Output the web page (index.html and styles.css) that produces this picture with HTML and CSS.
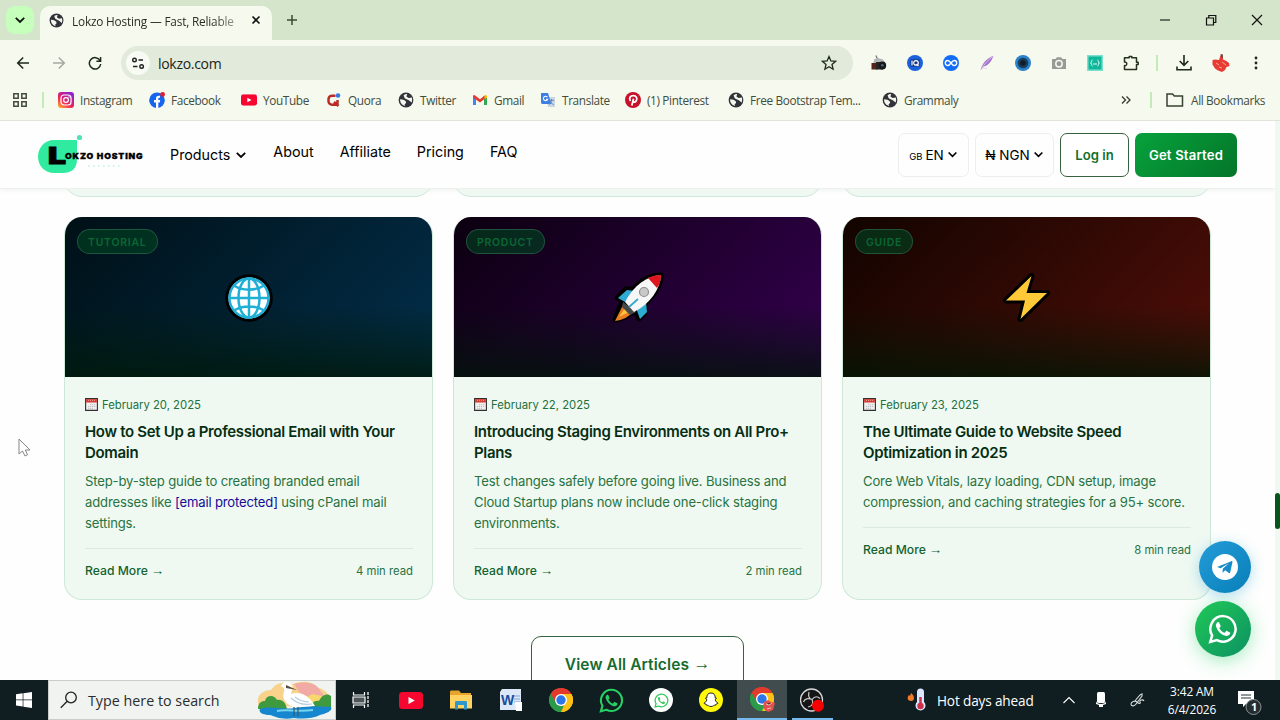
FILE: index.html
```html
<!DOCTYPE html>
<html lang="en">
<head>
    <meta charset="UTF-8">
    <meta name="viewport" content="width=device-width, initial-scale=1.0">
    <title>Lokzo Hosting — Fast, Reliable</title>
    <link rel="stylesheet" href="styles.css">
</head>
<body>
    <!-- Shared icons -->
    <svg class="sprite" aria-hidden="true">
        <symbol id="chevron" viewBox="0 0 12 12"><path d="M1.8 3.8 6 8l4.2-4.2" fill="none" stroke="currentColor" stroke-width="1.8"/></symbol>
        <symbol id="site" viewBox="0 0 16 16">
            <circle cx="8" cy="8" r="7.4" fill="#30343a"/>
            <path d="M9.2 2.1 8.4 4.4 10.6 6l3.2-.4c.5 1.5.5 3.4-.2 5L10.8 8.300 8.600 7.300 6.700 6.200 5.600 3.300C6.700 2.400 8 2 9.200 2.100zM2.100 7.300l3.400.5 2.300 1.400.3 1.700-1.500 1.300.5 1.700C4 13.400 1.900 10.600 2.100 7.300z" fill="#f4f8ec"/>
        </symbol>
        <symbol id="calendar" viewBox="0 0 13 13">
            <path d="M.6.6h11.8v11.8H.6z" fill="#f1eeee" stroke="#30302f" stroke-width="1.1"/>
            <path d="M1.100 1.100h10.800v3.400H1.100z" fill="#d63b30"/>
            <path d="M3 2.400h7" stroke="#f3b5ae" stroke-width=".8" stroke-dasharray="1 1"/>
            <path d="M5 6.700h6M3 8.500h8M3 10.300h5" stroke="#b5b5bd" stroke-width=".9" stroke-dasharray="1.200 .8"/>
        </symbol>
        <symbol id="whatsapp" viewBox="0 0 24 24">
            <path d="M12.100 1.700a10.200 10.200 0 0 0-8.800 15.400L1.800 22.300l5.300-1.400A10.200 10.200 0 1 0 12.100 1.700z" fill="none" stroke="currentColor" stroke-width="2"/>
            <path d="M8.400 6.500c-.4-.1-.9 0-1.200.4-.8.900-1.100 2-.7 3.200 1.100 3.500 3.900 6.200 7.400 7.300 1.300.4 2.700-.1 3.500-1.200.4-.6.500-1.300.2-1.500l-2.400-1.200c-.3-.1-.6 0-.8.2l-.9 1.100c-.2.200-.4.200-.6.100-1.600-.7-2.900-1.900-3.700-3.400-.1-.2-.1-.4.1-.6l.7-.8c.2-.2.200-.5.1-.7L9 7c-.1-.3-.3-.5-.6-.5z" fill="currentColor"/>
        </symbol>
        <symbol id="youtube" viewBox="0 0 24 17"><rect width="24" height="17" rx="3.500" fill="#f5072f"/><path d="m9.500 5 6.300 3.500L9.500 12z" fill="#fff"/></symbol>
        <symbol id="chrome" viewBox="0 0 24 24">
            <path d="M12 12 1.610 6A12 12 0 0 1 22.390 6z" fill="#e23b2e"/>
            <path d="M12 12 22.390 6A12 12 0 0 1 12 24z" fill="#fbc116"/>
            <path d="M12 12v12A12 12 0 0 1 1.610 6z" fill="#2c9b49"/>
            <path d="M12 6h10.400A12 12 0 0 1 12 24l5.200-9z" fill="#fbc116"/>
            <path d="M1.610 6A12 12 0 0 1 22.390 6H12v6l-5.200 3z" fill="#e23b2e"/>
            <path d="M1.610 6 6.800 15l5.200 3 3-.5L12 24A12 12 0 0 1 1.610 6z" fill="#2c9b49"/>
            <circle cx="12" cy="12" r="6" fill="#fff"/><circle cx="12" cy="12" r="4.700" fill="#2b76e9"/>
        </symbol>
    </svg>

    <div class="tab-strip">
        <button class="tab-search"><svg width="12" height="12"><use href="#chevron"/></svg></button>
        <div class="tab">
            <svg class="tab-icon" width="15" height="15"><use href="#site"/></svg>
            <span class="tab-title">Lokzo Hosting — Fast, Reliable</span>
            <svg width="10" height="10" viewBox="0 0 10 10"><path d="m1.500 1.500 7 7m0-7-7 7" stroke="#111" stroke-width="1.600"/></svg>
        </div>
        <svg class="new-tab" width="12" height="12" viewBox="0 0 12 12"><path d="M6 1v10M1 6h10" stroke="#3a4a36" stroke-width="1.500"/></svg>
        <div class="window-controls">
            <svg width="12" height="12" viewBox="0 0 12 12"><path d="M1 6h10" stroke="#111" stroke-width="1.100"/></svg>
            <svg width="12" height="12" viewBox="0 0 12 12"><path d="M1.500 4h7v7h-7zM3.800 3.700V1.500h7v7H8.800" fill="none" stroke="#111" stroke-width="1.200"/></svg>
            <svg width="12" height="12" viewBox="0 0 12 12"><path d="m1 1 10 10M11 1 1 11" stroke="#111" stroke-width="1.200"/></svg>
        </div>
    </div>

    <div class="toolbar">
        <div class="nav-buttons">
            <svg width="14" height="14" viewBox="0 0 14 14"><path d="M13 7H2M7.200 1.500 1.700 7l5.500 5.500" fill="none" stroke="#1d2a1a" stroke-width="1.500"/></svg>
            <svg width="14" height="14" viewBox="0 0 14 14"><path d="M1 7h11M6.800 1.500 12.300 7l-5.500 5.500" fill="none" stroke="#a4aaa0" stroke-width="1.500"/></svg>
            <svg width="14" height="14" viewBox="0 0 14 14"><path d="M12 4.500A5.700 5.700 0 1 0 12.700 8M12.600 1v4.200H8.400" fill="none" stroke="#1d2a1a" stroke-width="1.500"/></svg>
        </div>
        <div class="address-bar">
            <span class="site-info"><svg width="14" height="14" viewBox="0 0 14 14"><path d="M7.500 4H12M2 10.500h4.500" stroke="#222" stroke-width="1.500"/><circle cx="3.500" cy="4" r="1.800" fill="none" stroke="#222" stroke-width="1.400"/><circle cx="10.600" cy="10.500" r="1.800" fill="none" stroke="#222" stroke-width="1.400"/></svg></span>
            <span class="url">lokzo.com</span>
            <svg width="16" height="16" viewBox="0 0 16 16"><path d="m8 1.500 1.900 4.400 4.800.4L11 9.500l1.100 4.700L8 11.700l-4.100 2.500L5 9.500 1.300 6.300l4.800-.4z" fill="none" stroke="#1d2a1a" stroke-width="1.300"/></svg>
        </div>
        <div class="extensions">
            <svg viewBox="0 0 16 16"><path d="m5 .5 1.500 4" stroke="#777" stroke-width="1.300"/><path d="M3 4.500 7 3l5 1.500 2 3v3H2z" fill="#b3b6b8"/><path d="M.5 8h6v6.500h-6z" fill="#562119"/><path d="M5 7h7v7.500H5z" fill="#292525"/><circle cx="11.300" cy="10.500" r="3.900" fill="#17191c"/><circle cx="11.300" cy="10.300" r="1.300" fill="#536776"/></svg>
            <svg viewBox="0 0 16 16"><circle cx="8" cy="8" r="8" fill="#1a62dd"/><rect x="3.500" y="4.500" width="9" height="7" fill="#102f79"/><path d="M5 5.500v5M9 5.600a2 2 0 1 0 0 4.600 2 2 0 0 0 0-4.600M9.500 9l2 2" fill="none" stroke="#fff" stroke-width="1.200"/></svg>
            <svg viewBox="0 0 16 16"><circle cx="8" cy="8" r="8" fill="#116df4"/><path d="M8 8c-1.500-2-2.200-2.500-3.200-2.500a2.400 2.400 0 0 0 0 5C5.800 10.500 6.500 10 8 8s2.200-2.500 3.200-2.500a2.400 2.400 0 0 1 0 5C10.200 10.500 9.500 10 8 8z" fill="none" stroke="#fff" stroke-width="1.400"/></svg>
            <svg viewBox="0 0 16 16"><path d="M14.500.8C8 3 3.500 8 1.500 15.200L5 11.500c4-.7 7.500-5 9.500-10.700z" fill="#a473cf"/><path d="M2 15C5 9 9 5 13.800 1.500M4 13.500h4" fill="none" stroke="#e4d0f0" stroke-width=".8"/></svg>
            <svg viewBox="0 0 16 16"><circle cx="8" cy="8" r="8" fill="#2b82c9"/><circle cx="8" cy="8" r="5.300" fill="#183e5c"/><circle cx="8" cy="8" r="2.800" fill="#111c27"/></svg>
            <svg viewBox="0 0 16 16"><path d="M1 4h3.500L6 2.200h4L11.500 4H15v10H1z" fill="#969b96"/><circle cx="8" cy="8.800" r="3.200" fill="none" stroke="#f5f8f0" stroke-width="1.500"/></svg>
            <svg viewBox="0 0 16 16"><path d="M0 0h16v16H0z" fill="#7be1cd"/><path d="M1.500 1.500h13v13h-13z" fill="#11b69b"/><path d="M5.500 5C4 5 5.200 8 3.500 8 5.200 8 4 11 5.500 11M10.500 5c1.500 0 .3 3 2 3-1.700 0-.5 3-2 3M6 9h4" fill="none" stroke="#dffff6"/></svg>
            <svg viewBox="0 0 16 16"><path d="M1.500 2.800h4.700V1.500h2.600v1.300h4.700v4.400h1.700v2.400h-1.700v5h-12v-4c3 .5 3-4 0-3.500z" fill="none" stroke="#25331f" stroke-width="1.500" stroke-linejoin="round"/></svg>
        </div>
        <span class="divider"></span>
        <div class="browser-actions">
            <svg width="16" height="16" viewBox="0 0 16 16"><path d="M8 0v10M3.700 6 8 10.300 12.300 6M1 11.500v3.300h14v-3.300" fill="none" stroke="#1d2a1a" stroke-width="1.600"/></svg>
            <svg width="18" height="18" viewBox="0 0 18 18"><path d="M8.500 1.500 11 1v4.500l3 1.200 3 2.300.5 3-3 1-1.500 3-3 2-4-1.500-3-2-2.500-4L.5 6l3-.5L7 6z" fill="#e63c34"/><path d="m8.500 0 2.500.5v3.500L9 3.500z" fill="#764b3e"/><path d="m4 9 3 2m3-3 4 3M7 13l3 1" stroke="#ffa18f"/></svg>
            <svg width="4" height="14" viewBox="0 0 4 14" fill="#1d2a1a"><circle cx="2" cy="2" r="1.400"/><circle cx="2" cy="7" r="1.400"/><circle cx="2" cy="12" r="1.400"/></svg>
        </div>
    </div>

    <div class="bookmarks">
        <svg width="14" height="14" viewBox="0 0 14 14"><path d="M.8.800h4.400v4.400H.8zM8.800.800h4.400v4.400H8.800zM.8 8.800h4.400v4.400H.8zM8.800 8.800h4.400v4.400H8.800z" fill="none" stroke="#434c3d" stroke-width="1.500"/></svg>
        <span class="divider"></span>
        <div class="bookmark-list">
            <a class="bookmark"><svg viewBox="0 0 16 16"><defs><linearGradient id="ig" x1="0" y1="1" x2=".7" y2="0"><stop offset="0" stop-color="#ffbd28"/><stop offset=".45" stop-color="#ed245c"/><stop offset="1" stop-color="#8f22d0"/></linearGradient></defs><rect width="16" height="16" rx="3" fill="url(#ig)"/><rect x="3" y="3" width="10" height="10" rx="3" fill="none" stroke="#fff" stroke-width="1.200"/><circle cx="8" cy="8" r="2.400" fill="none" stroke="#fff" stroke-width="1.200"/><circle cx="11" cy="5" r=".7" fill="#fff"/></svg>Instagram</a>
            <a class="bookmark"><svg viewBox="0 0 16 16"><circle cx="8" cy="8.200" r="7.800" fill="#1565ee"/><path d="M7 16v-5.500H5V8h2V6.500C7 4.300 8.200 3.400 11 3.700v2.100C9.600 5.700 9.300 6 9.300 7v1h1.900l-.4 2.500H9.300V16z" fill="#fff"/><circle cx="13.600" cy="2.400" r="2.400" fill="#dd1e32"/></svg>Facebook</a>
            <a class="bookmark"><svg viewBox="0 0 16 16"><use href="#youtube" y="2.300" width="16" height="11.400"/></svg>YouTube</a>
            <a class="bookmark"><svg viewBox="0 0 16 16"><path d="M9.500 3.700H6a3.500 3.500 0 0 0-3.500 3.500v2A3.500 3.500 0 0 0 6 12.700h4c1 0 1.500-.6 1.500-1.500V8M8 10l4.500 4" fill="none" stroke="#b92b27" stroke-width="2.500"/><circle cx="12" cy="3.500" r="2.300" fill="#3977e5"/></svg>Quora</a>
            <a class="bookmark"><svg><use href="#site"/></svg>Twitter</a>
            <a class="bookmark"><svg viewBox="0 0 16 16"><path d="M1 4v9h3V6z" fill="#4285f4"/><path d="M15 4v9h-3V6z" fill="#34a853"/><path d="M12 7V4l1.500-1L15 3.500V6z" fill="#fbbc04"/><path d="M1 3.500 2.500 3 8 7.200 12.500 3.600V7L8 10.500 1 5.500z" fill="#e33b2e"/></svg>Gmail</a>
            <a class="bookmark"><svg viewBox="0 0 16 16"><path d="M6 5h9v10H8z" fill="#ccd6e2"/><path d="M1 1h7l3.500 11H2l-1-1z" fill="#3e7de4"/><path d="M7.500 5.300a2.200 2.200 0 1 0 .2 2H6" fill="none" stroke="#fff" stroke-width="1.100"/><path d="M9 8.300h5M11.500 7v1.300c0 2-1 3.200-2.500 4.200m1-3c.7 1.300 2 2.500 3.600 3" fill="none" stroke="#5c87be"/></svg>Translate</a>
            <a class="bookmark"><svg viewBox="0 0 16 16"><circle cx="8" cy="8" r="8" fill="#c7102a"/><path d="M6.800 13.500 8.500 6.700M5.500 9C3.500 6 5.200 3.700 8.300 3.700c3 0 4.300 2.400 3.100 4.800-1 2-3.200 2-3.800.7" fill="none" stroke="#fff" stroke-width="1.700"/></svg>(1) Pinterest</a>
            <a class="bookmark"><svg><use href="#site"/></svg>Free Bootstrap Tem...</a>
            <a class="bookmark"><svg><use href="#site"/></svg>Grammaly</a>
        </div>
        <svg class="more-bookmarks" width="10" height="10" viewBox="0 0 10 10"><path d="m1 1.500 3.500 3.500L1 8.500m4.500-7L9 5 5.500 8.500" fill="none" stroke="#333b2e" stroke-width="1.300"/></svg>
        <span class="divider"></span>
        <a class="all-bookmarks"><svg width="18" height="14" viewBox="0 0 18 14"><path d="M1 1h5.500l1.800 2H16.500v10H1z" fill="none" stroke="#38432f" stroke-width="1.500"/></svg>All Bookmarks</a>
    </div>

    <div class="page">
        <header class="site-header">
            <svg class="logo" width="110" height="44" viewBox="0 0 110 44">
                <path d="M17 8h23v19c0 9-5 14-14 14h-9C8 41 1 34 1 25S7 8 17 8z" fill="#30eaa0"/>
                <circle cx="42.500" cy="5.500" r="2.600" fill="#4ee2b5"/>
                <text class="logo-initial" x="11" y="32" textLength="18" lengthAdjust="spacingAndGlyphs">L</text>
                <text class="logo-name" x="28" y="27" textLength="78.500" lengthAdjust="spacingAndGlyphs">OKZO HOSTING</text>
                <path d="M51 34h32" stroke="#b9f2e0" stroke-width="1.300" stroke-dasharray="1.500 3.500"/>
            </svg>
            <nav class="menu">
                <a class="menu-products">Products <svg width="12" height="12"><use href="#chevron"/></svg></a>
                <a>About</a>
                <a>Affiliate</a>
                <a>Pricing</a>
                <a>FAQ</a>
            </nav>
            <div class="header-actions">
                <button class="select select-lang"><small>GB</small> EN <svg width="11" height="11"><use href="#chevron"/></svg></button>
                <button class="select select-currency">₦ NGN <svg width="11" height="11"><use href="#chevron"/></svg></button>
                <button class="btn btn-login">Log in</button>
                <button class="btn btn-start">Get Started</button>
            </div>
        </header>

        <main class="articles">
            <div class="previous-row"><i></i><i></i><i></i></div>
            <div class="card-grid">
                <article class="card">
                    <div class="card-cover cover-blue">
                        <span class="badge">TUTORIAL</span>
                        <svg width="50" height="50" viewBox="0 0 50 50"><circle cx="25" cy="25" r="23.800" fill="#000"/><circle cx="25" cy="25" r="20.500" fill="#fff"/><g fill="none" stroke="#20afd5" stroke-width="2.500"><circle cx="25" cy="25" r="19.500"/><ellipse cx="25" cy="25" rx="10.500" ry="19.500"/><path d="M25 5v40M5 25h40M10 12.500c8 5.500 22 5.500 30 0M10 37.500c8-5.500 22-5.500 30 0"/></g></svg>
                    </div>
                    <div class="card-body">
                        <div class="date"><svg width="13" height="13"><use href="#calendar"/></svg>February 20, 2025</div>
                        <h3>How to Set Up a Professional Email with Your Domain</h3>
                        <p>Step-by-step guide to creating branded email addresses like <a class="email">[email protected]</a> using cPanel mail settings.</p>
                        <div class="card-footer"><a>Read More <span class="arrow">→</span></a><span>4 min read</span></div>
                    </div>
                </article>
                <article class="card">
                    <div class="card-cover cover-purple">
                        <span class="badge">PRODUCT</span>
                        <svg width="54" height="54" viewBox="0 0 54 54">
                            <path d="M50 4C39 4 30 9 23 18l-8 0-9 9 6 3-4 7-4 12c6-1 12-3 15-6l5-3 4 8 6-6 0-9C42 25 50 16 50 4z" fill="#000" stroke="#000" stroke-width="5" stroke-linejoin="round"/>
                            <path d="m16 19-9 8 7 4 10-11zM35 31l1 10-7 7-4-11z" fill="#2facd4"/>
                            <path d="M12 34 4 50c8-1 13-4 17-8z" fill="#e77d20"/><path d="m14 37-6 9 10-5z" fill="#ffc33b"/>
                            <path d="m12 31-1 5 8 8 6-3z" fill="#46494a"/>
                            <path d="M50 4C36 5 23 14 14 31l9 10C40 32 49 18 50 4z" fill="#f7f7f7"/>
                            <path d="M50 4c-5 0-9 1-13 3l9 10c3-4 4-8 4-13z" fill="#dd171d"/>
                            <circle cx="33" cy="21" r="4.500" fill="#c8c8c8" stroke="#8f8f8f" stroke-width="1.200"/>
                            <path d="m18 36 9-8" stroke="#34a8cd" stroke-width="1.800"/>
                        </svg>
                    </div>
                    <div class="card-body">
                        <div class="date"><svg width="13" height="13"><use href="#calendar"/></svg>February 22, 2025</div>
                        <h3>Introducing Staging Environments on All Pro+ Plans</h3>
                        <p>Test changes safely before going live. Business and Cloud Startup plans now include one-click staging environments.</p>
                        <div class="card-footer"><a>Read More <span class="arrow">→</span></a><span>2 min read</span></div>
                    </div>
                </article>
                <article class="card">
                    <div class="card-cover cover-red">
                        <span class="badge">GUIDE</span>
                        <svg width="50" height="54" viewBox="0 0 50 54"><path d="M29.500 5 4 29.500h19L18.500 48 45 22H24.500z" fill="#ffc938" stroke="#000" stroke-width="6" stroke-linejoin="round" paint-order="stroke"/></svg>
                    </div>
                    <div class="card-body">
                        <div class="date"><svg width="13" height="13"><use href="#calendar"/></svg>February 23, 2025</div>
                        <h3>The Ultimate Guide to Website Speed Optimization in 2025</h3>
                        <p>Core Web Vitals, lazy loading, CDN setup, image compression, and caching strategies for a 95+ score.</p>
                        <div class="card-footer"><a>Read More <span class="arrow">→</span></a><span>8 min read</span></div>
                    </div>
                </article>
            </div>
            <a class="view-all">View All Articles <span class="arrow">→</span></a>
        </main>

        <a class="float-btn telegram"><svg width="26" height="26" viewBox="0 0 26 26"><circle cx="13" cy="13" r="13" fill="#fff"/><path d="m5 13 14.300-5.800c.7-.3 1.300.2 1.100 1.100L18.200 18.400c-.2.800-.7 1-1.300.6l-3.700-2.700-1.800 1.800c-.3.300-.5.400-.9.300l.3-3.600L17 9l-8.300 5.200-3.600-1.100z" fill="#168bc8"/></svg></a>
        <a class="float-btn whatsapp"><svg width="30" height="30"><use href="#whatsapp"/></svg></a>
        <div class="scrollbar"><div class="scroll-thumb"></div></div>
        <svg class="cursor" width="14" height="20" viewBox="0 0 14 20"><path d="M1 1v15l3.500-3 2.500 5 2.500-1.200L7.300 12H12z" fill="#fff" stroke="#858585"/></svg>
    </div>

    <div class="taskbar">
        <div class="start"><svg width="16" height="16" viewBox="0 0 16 16"><path d="M0 2.200 6.700 1.300v6.200H0zM7.400 1.200 16 0v7.500H7.400zM0 8.300h6.700v6.200L0 13.600zM7.400 8.300H16V16l-8.600-1.300z" fill="#fff"/></svg></div>
        <div class="task-search">
            <svg width="18" height="18" viewBox="0 0 18 18"><circle cx="11" cy="6.500" r="5.300" fill="none" stroke="#222" stroke-width="1.300"/><path d="m7.200 10.300-6.400 6.400" stroke="#222" stroke-width="1.300"/></svg>
            <span>Type here to search</span>
            <svg class="search-art" width="76" height="38" viewBox="0 0 76 38">
                <path d="M2 25C-2 17 4 9 14 9c4-7 13-9 22-6 9-4 20-3 25 4 8 1 14 9 13 19z" fill="#f8d28b"/>
                <path d="M37 3c14-4 24 0 27 8 4 3 5 9 3 12L43 12z" fill="#f2aaa4"/>
                <path d="M49 24c-2-6 5-13 10-10 8 0 14 6 15 12z" fill="#f8d76f"/>
                <path d="M1 28c0-6 3-8 7-8 1-6 9-7 12-1 6-1 9 4 10 9zM53 27c1-5 5-8 9-7 3-7 9-8 12-5v14z" fill="#3f993f"/>
                <path d="M3 28c12-4 20 1 35-1 12-3 23-1 36-1 2 4-6 7-11 8-8 4-18 4-26 3-12 2-18-1-24-3C7 34 1 32 3 28z" fill="#1687cf"/>
                <path d="M20 30c9-2 20 1 36-1" fill="none" stroke="#75d5ed" stroke-width="2"/>
                <path d="M24 5c2-5 9-5 11-1 2 3-1 7-1 9 8-3 18 1 24 12l-13 1c-8 1-15-1-18-8-2-5 1-7 0-11z" fill="#fff"/>
                <path d="m29 4 11 5-11-2z" fill="#584c3c"/><path d="M34 17c6 6 14 7 21 6M38 16c5 4 9 5 14 5" fill="none" stroke="#b6cde0" stroke-width="1.200"/>
                <path d="M37 26v9m4-9v9" stroke="#3c5668" stroke-width="1.200"/>
            </svg>
        </div>
        <div class="task-apps">
            <div class="app"><svg width="18" height="18" viewBox="0 0 18 18"><path d="M1.500 1v3h11V1M1.500 17v-3h11v3" fill="none" stroke="#fff" stroke-width="1.200"/><path d="M1 6h12v6H1z" fill="#4d5556" stroke="#fff" stroke-width="1.200"/><path d="M16 1v16" stroke="#ddd" stroke-width="1.500" stroke-dasharray="3 1"/></svg></div>
            <div class="app"><svg width="24" height="17"><use href="#youtube"/></svg></div>
            <div class="app"><svg width="22" height="20" viewBox="0 0 22 20"><path d="M0 2c0-1 .5-1.500 1.500-1.500H9L11 3h10v15H0z" fill="#e6a42d"/><path d="M0 5h22v13.500H0z" fill="#ffd261"/><path d="M5 19.500v-7c0-1 .5-1.500 1.500-1.500h9c1 0 1.500.5 1.500 1.500v7h-3V15H8v4.500z" fill="#2e98ce"/></svg></div>
            <div class="app"><svg width="22" height="22" viewBox="0 0 22 22"><path d="M2 0h19v21H0V3z" fill="#dce8f7"/><path d="M14 7h6m-6 3h6m-6 3h6" stroke="#80a6d5"/><path d="M15 13h7v9h-6z" fill="#fff"/><text class="word-letter" x="1" y="16">W</text></svg></div>
            <div class="app"><svg width="24" height="24"><use href="#chrome"/></svg></div>
            <div class="app wa-green"><svg width="25" height="25"><use href="#whatsapp"/></svg></div>
            <div class="app wa-white"><span><svg width="15" height="15"><use href="#whatsapp"/></svg></span></div>
            <div class="app"><svg width="24" height="24" viewBox="0 0 24 24"><circle cx="12" cy="12" r="12" fill="#fff80b"/><path d="M12 5c-3 0-4.400 2-4.200 5l-1.400.3 1.500 1.300c-.6 2-1.700 3-3 3.400.3.900 1.500.9 2 1l.5 1.200c1.900-.3 2.400 1.300 4.600 1.300s2.700-1.600 4.600-1.300l.5-1.200c.5-.1 1.700-.1 2-1-1.300-.4-2.400-1.400-3-3.400l1.500-1.300-1.400-.3C16.400 7 15 5 12 5z" fill="#fff" stroke="#222"/></svg></div>
            <div class="app active"><svg width="26" height="26" viewBox="0 0 26 26"><use href="#chrome" width="24" height="24"/><path d="m14 15 4-2 3 2 4 1-2 7-5 2-5-4z" fill="#df514d"/><path d="m16 17 3 1 3-2m-5 6 4-1" stroke="#fac0b7"/></svg></div>
            <div class="app open"><svg width="24" height="24" viewBox="0 0 24 24"><circle cx="11.500" cy="12" r="11" fill="#151516" stroke="#d8d8d8" stroke-width="1.300"/><path d="M9 4c-1 4 0 7 3 7.500 3-4 6-3 8-1M12 11.500c2 4 0 7-4 7.500M12 11.500C8 9.500 4.500 11 3.500 14" fill="none" stroke="#c9c9c9" stroke-width="1.200"/><circle cx="18" cy="17.700" r="6" fill="#f60000"/></svg></div>
        </div>
        <div class="tray">
            <svg class="weather-icon" width="20" height="24" viewBox="0 0 20 24"><path d="M4 5c4 3 4 8 0 8S0 9 2 7l1 1z" fill="#f07c2b"/><path d="M10 4a3.500 3.500 0 0 1 7 0v10a5 5 0 1 1-7 0z" fill="#dce7ff"/><path d="M13.500 9v9" stroke="#cd3047" stroke-width="2.500"/><circle cx="13.500" cy="18" r="3.200" fill="#cd3047"/></svg>
            <span class="weather">Hot days ahead</span>
            <svg class="tray-up" width="12" height="8" viewBox="0 0 12 8"><path d="m.5 7 5.500-5.500L11.500 7" fill="none" stroke="#fff" stroke-width="1.100"/></svg>
            <svg class="mic" width="10" height="16" viewBox="0 0 10 16"><rect x="1" width="8" height="11" rx="1.500" fill="#fff"/><path d="M0 9c0 4 10 4 10 0v3L7 13v2H3v-2l-3-1z" fill="#fff"/></svg>
            <svg class="pen" width="15" height="14" viewBox="0 0 15 14"><path d="m4 9 6-7 2-1v2L6 11c-2 3-5 2-5 0s4-4 6-2 4 2 3 0 3-3 4-1" fill="none" stroke="#d4dada" stroke-width="1.100"/></svg>
            <div class="clock"><span>3:42 AM</span><span>6/4/2026</span></div>
            <svg class="notice" width="26" height="26" viewBox="0 0 26 26"><path d="M1 1h16v13H9l-3 3v-3H1z" fill="#fff"/><path d="M4 5h10M4 8h10" stroke="#273234"/><circle cx="16.500" cy="17" r="7.500" fill="#252d30" stroke="#8b9294"/><text class="notice-count" x="14" y="21">1</text></svg>
        </div>
    </div>
</body>
</html>
```
FILE: styles.css
```css
* {
    box-sizing: border-box;
}
body {
    margin: 0;
    width: 1280px;
    height: 720px;
    overflow: hidden;
    display: flex;
    flex-direction: column;
    font-family: Inter, sans-serif;
    background: #f6f9ee;
}
svg {
    display: block;
    flex-shrink: 0;
}
.sprite {
    position: absolute;
    width: 0;
    height: 0;
}
button {
    font-family: inherit;
    padding: 0;
    border: none;
}

/* Browser tabs */
.tab-strip {
    height: 40px;
    flex-shrink: 0;
    display: flex;
    align-items: center;
    padding-left: 6px;
    background: #d5e5cb;
}
.tab-search {
    width: 28px;
    height: 28px;
    display: flex;
    align-items: center;
    justify-content: center;
    border-radius: 9px;
    background: #c5ffbb;
    color: #111;
}
.tab {
    width: 232px;
    height: 34px;
    margin: 6px 0 0 6px;
    padding: 0 10px 0 9px;
    display: flex;
    align-items: center;
    background: #f6f9ee;
    border-radius: 10px 10px 0 0;
}
.tab-icon {
    margin-top: -6px;
}
.tab > svg:last-child {
    margin-top: -6px;
}
.tab-title {
    width: 166px;
    margin: -4px 13px 0 8px;
    white-space: nowrap;
    font: 11.8px "Open Sans", sans-serif;
    letter-spacing: -0.18px;
    color: #273023;
    mask-image: linear-gradient(90deg, #000 84%, rgba(0, 0, 0, 0.4));
}
.new-tab {
    margin-left: 14px;
}
.window-controls {
    display: flex;
    gap: 34px;
    margin: 0 17px 0 auto;
}

/* Toolbar */
.toolbar {
    height: 46px;
    flex-shrink: 0;
    display: flex;
    align-items: center;
    background: #f6f9ee;
}
.nav-buttons {
    display: flex;
    gap: 22px;
    padding-left: 16px;
}
.address-bar {
    width: 732px;
    height: 34px;
    margin-left: 19px;
    padding: 0 16px 0 5px;
    display: flex;
    align-items: center;
    border-radius: 17px;
    background: #e2eadb;
}
.site-info {
    width: 24px;
    height: 24px;
    display: grid;
    place-items: center;
    border-radius: 50%;
    background: #f8fbf3;
}
.url {
    flex: 1;
    padding-left: 8px;
    font: 14px "Open Sans", sans-serif;
    letter-spacing: -0.3px;
    color: #1b2419;
}
.extensions {
    display: flex;
    gap: 20px;
    margin-left: 18px;
}
.extensions svg {
    width: 16px;
    height: 16px;
}
.divider {
    width: 2px;
    height: 16px;
    flex-shrink: 0;
    background: #c5eab9;
}
.toolbar .divider {
    margin-left: 17px;
}
.browser-actions {
    display: flex;
    align-items: center;
    gap: 20px;
    margin-left: 18px;
}
.browser-actions svg:last-child {
    margin-left: 4px;
}

/* Bookmarks */
.bookmarks {
    height: 35px;
    flex-shrink: 0;
    padding: 0 15px 7px 13px;
    display: flex;
    align-items: center;
    border-bottom: 1px solid #e1e5d9;
    font: 11.8px "Open Sans", sans-serif;
    letter-spacing: -0.36px;
    color: #424d3d;
}
.bookmarks > .divider {
    margin-left: 15px;
}
.bookmark-list {
    display: grid;
    grid-template-columns: 91px 92px 85px 72px 74px 68px 85px 103px 154px 90px;
    margin-left: 14px;
}
.bookmark {
    display: flex;
    align-items: center;
    gap: 6px;
    white-space: nowrap;
}
.bookmark svg {
    width: 16px;
    height: 16px;
}
.more-bookmarks {
    margin-left: auto;
}
.bookmarks > .more-bookmarks + .divider {
    margin-left: 19px;
}
.all-bookmarks {
    display: flex;
    align-items: center;
    gap: 7px;
    margin-left: 14px;
    white-space: nowrap;
}

/* Website */
.page {
    position: relative;
    height: 559px;
    flex-shrink: 0;
    overflow: hidden;
    background: #fdfefd;
}
.site-header {
    height: 68px;
    width: 1275px;
    padding: 0 38px 0 37px;
    display: flex;
    align-items: center;
    border-bottom: 1px solid #edf2ef;
    box-shadow: 0 1px 5px rgba(0, 30, 15, 0.06);
    background: #fefefe;
}
.logo {
    margin-top: -1px;
}
.logo-initial {
    font: 900 23px Inter, sans-serif;
    stroke: #000;
    stroke-width: 1;
}
.logo-name {
    font: 900 8px Inter, sans-serif;
    letter-spacing: 0.8px;
    stroke: #000;
    stroke-width: 0.3;
}
.menu {
    display: flex;
    align-items: center;
    gap: 26px;
    margin: -6px 0 0 23px;
    font-size: 14.3px;
    font-weight: 400;
    color: #000;
}
.menu-products {
    display: flex;
    align-items: center;
    gap: 5px;
    padding-top: 6px;
}
.header-actions {
    display: flex;
    gap: 6px;
    margin-left: auto;
}
.header-actions button {
    height: 44px;
    display: flex;
    align-items: center;
    justify-content: center;
    border-radius: 7px;
}
.header-actions .select {
    gap: 3px;
    border: 1px solid #ebefed;
    background: #fefefe;
    font-size: 13.5px;
    font-weight: 400;
    color: #000;
}
.select small {
    font-size: 9.5px;
    padding-top: 3px;
}
.select-lang {
    width: 71px;
}
.select-currency {
    width: 79px;
}
.btn {
    font-size: 13.1px;
    font-weight: 600;
}
.header-actions .btn-login {
    width: 69px;
    border: 1.5px solid #37613e;
    background: #fff;
    color: #126f2d;
}
.btn-start {
    width: 102px;
    letter-spacing: 0.2px;
    background: linear-gradient(135deg, #08a13c, #037629);
    color: #fff;
}

/* Articles */
.articles {
    width: 1147px;
    margin-left: 64px;
    display: flex;
    flex-direction: column;
}
.previous-row,
.card-grid {
    display: grid;
    grid-template-columns: repeat(3, 1fr);
    gap: 20px;
}
.previous-row {
    height: 8px;
    overflow: hidden;
}
.previous-row i {
    height: 40px;
    margin-top: -32px;
    border: 1px solid #cfe7d8;
    border-radius: 18px;
    background: #eff8f2;
}
.card-grid {
    margin-top: 20px;
}
.card {
    height: 383px;
    overflow: hidden;
    border: 1px solid #cee8d7;
    border-top: none;
    border-radius: 18px;
    background: #eff9f2;
}
.card-cover {
    position: relative;
    height: 160px;
    padding-top: 1px;
    display: flex;
    align-items: center;
    justify-content: center;
}
.cover-blue {
    background: linear-gradient(0deg, rgba(0, 25, 9, 0.8), transparent 45%), linear-gradient(135deg, #001016, #022f4b);
}
.cover-purple {
    background: linear-gradient(0deg, rgba(0, 20, 8, 0.8), transparent 45%), linear-gradient(135deg, #0c0010, #34004f);
}
.cover-red {
    background: linear-gradient(0deg, rgba(0, 22, 4, 0.8), transparent 45%), linear-gradient(135deg, #120400, #510e08);
}
.badge {
    position: absolute;
    top: 12px;
    left: 12px;
    height: 25px;
    padding: 1px 10px 0;
    display: flex;
    align-items: center;
    border: 1px solid rgba(60, 135, 100, 0.45);
    border-radius: 13px;
    background: rgba(0, 68, 34, 0.6);
    font-size: 10.4px;
    font-weight: 600;
    letter-spacing: 0.8px;
    color: #0b6735;
}
.card-body {
    padding: 20px 19px 0 20px;
}
.date {
    height: 15px;
    display: flex;
    align-items: center;
    gap: 4px;
    font-size: 11.3px;
    color: #22703c;
}
.card h3 {
    margin: 9px 0 0;
    font-size: 15px;
    font-weight: 600;
    line-height: 21px;
    letter-spacing: -0.32px;
    color: #052e12;
}
.card p {
    margin: 8px 0 0;
    font-size: 13.1px;
    line-height: 21px;
    letter-spacing: -0.16px;
    color: #28733f;
}
.card p .email {
    color: #150b95;
}
.card-footer {
    margin-top: 14px;
    padding-top: 14px;
    display: flex;
    justify-content: space-between;
    align-items: center;
    border-top: 1px solid #dcebe1;
    line-height: 16px;
    font-size: 11.3px;
    color: #28733f;
}
.card-footer a {
    display: flex;
    gap: 3px;
    font-size: 12.2px;
    font-weight: 500;
    color: #126330;
}
.arrow {
    font-family: "Liberation Sans", sans-serif;
    font-size: 1.1em;
    font-weight: 400;
}
.view-all {
    width: 213px;
    height: 56px;
    margin-top: 36px;
    align-self: center;
    display: flex;
    align-items: center;
    justify-content: center;
    gap: 4px;
    border: 1.5px solid #37613e;
    border-radius: 10px;
    font-size: 15.5px;
    letter-spacing: 0.1px;
    font-weight: 600;
    color: #176b30;
}

/* Floating items over the page */
.float-btn {
    position: absolute;
    display: grid;
    place-items: center;
    border-radius: 50%;
    color: #fff;
}
.telegram {
    right: 29px;
    top: 420px;
    width: 52px;
    height: 52px;
    background: linear-gradient(135deg, #249cd8, #087fb8);
    box-shadow: 0 3px 14px rgba(34, 158, 217, 0.35);
}
.whatsapp {
    right: 29px;
    top: 480px;
    width: 56px;
    height: 56px;
    background: linear-gradient(135deg, #20c957, #0c9162);
    box-shadow: 0 4px 18px rgba(37, 211, 102, 0.4);
}
.scrollbar {
    position: absolute;
    right: 0;
    top: 0;
    width: 5px;
    height: 100%;
    padding-top: 372px;
    background: #eff9f2;
}
.scroll-thumb {
    height: 36px;
    border-radius: 3px;
    background: #06551f;
}
.cursor {
    position: absolute;
    left: 18px;
    top: 317px;
}

/* Taskbar */
.taskbar {
    height: 40px;
    flex-shrink: 0;
    display: flex;
    background: #101e21;
    color: #fff;
    font-family: "Open Sans", sans-serif;
}
.start {
    width: 48px;
    display: grid;
    place-items: center;
}
.task-search {
    width: 288px;
    padding-left: 11px;
    display: flex;
    align-items: center;
    border: 1px solid #c9cecb;
    background: #f1f3f1;
    color: #292d2b;
    font-size: 14.3px;
}
.task-search span {
    margin-left: 10px;
    white-space: nowrap;
}
.search-art {
    margin: 0 2px 0 auto;
}
.task-apps {
    display: flex;
}
.app {
    width: 50px;
    display: grid;
    place-items: center;
}
.wa-green {
    color: #28cf62;
}
.wa-white span {
    width: 24px;
    height: 24px;
    display: grid;
    place-items: center;
    border-radius: 50%;
    background: #fff;
    color: #31c85b;
}
.word-letter {
    font: bold 14px "Liberation Sans", sans-serif;
    fill: #174c9c;
}
.app.active {
    margin-left: 1px;
    padding-left: 2px;
    background: #414c4e;
    box-shadow: inset 0 -2px #76b9ed;
}
.app.open {
    background: linear-gradient(#76b9ed, #76b9ed) center bottom / 41px 2px no-repeat;
}
.tray {
    flex: 1;
    display: flex;
    align-items: center;
    margin-left: 70px;
}
.weather {
    width: 98px;
    margin-left: 10px;
    font-size: 13.6px;
    letter-spacing: -0.15px;
    white-space: nowrap;
}
.tray-up {
    margin-left: 28px;
}
.mic {
    margin-left: 21px;
}
.pen {
    margin-left: 24px;
}
.clock {
    width: 54px;
    margin-left: 20px;
    display: flex;
    flex-direction: column;
    align-items: center;
    font-size: 11.9px;
    line-height: 18px;
    letter-spacing: -0.15px;
    white-space: nowrap;
}
.notice {
    margin: 5px 0 0 18px;
}
.notice-count {
    font: bold 11px "Open Sans", sans-serif;
    fill: #fff;
}
```
